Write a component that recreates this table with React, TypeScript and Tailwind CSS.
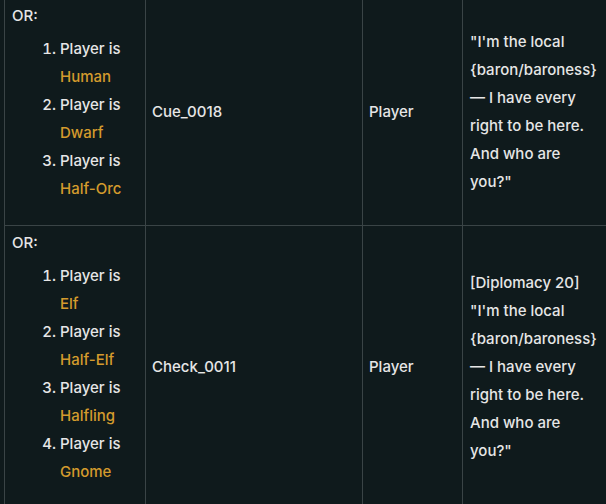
import React from "react";

type Row = {
    races: string[];
    id: string;
    speaker: string;
    lines: string[];
};

const rows: Row[] = [
    {
        races: ["Human", "Dwarf", "Half-Orc"],
        id: "Cue_0018",
        speaker: "Player",
        lines: [
            "\"I'm the local",
            "{baron/baroness}",
            "— I have every",
            "right to be here.",
            "And who are",
            "you?\"",
        ],
    },
    {
        races: ["Elf", "Half-Elf", "Halfling", "Gnome"],
        id: "Check_0011",
        speaker: "Player",
        lines: [
            "[Diplomacy 20]",
            "\"I'm the local",
            "{baron/baroness}",
            "— I have every",
            "right to be here.",
            "And who are",
            "you?\"",
        ],
    },
];

function ConditionCell({ races }: { races: string[] }) {
    return (
        <td className="border border-[#3a4446] px-[7px] pt-[3px] pb-[2px] align-top">
            <p className="leading-7">OR:</p>
            <ol className="list-decimal pl-[48px] mt-[5px] mb-[20px]">
                {races.map((race) => (
                    <li key={race} className="leading-7">
                        Player is
                        <br />
                        <span className="text-[#d49b2d]">{race}</span>
                    </li>
                ))}
            </ol>
        </td>
    );
}

export default function App() {
    return (
        <div
            className="w-[606px] h-[504px] overflow-hidden bg-[#0f1a1c] text-[#e6e6e6] text-[15px] font-medium"
            style={{ fontFamily: "Inter, 'Noto Sans', sans-serif" }}
        >
            <table className="ml-[4px] -mt-[2px] border-collapse table-fixed w-[660px]">
                <colgroup>
                    <col className="w-[141px]" />
                    <col className="w-[217px]" />
                    <col className="w-[100px]" />
                    <col className="w-[202px]" />
                </colgroup>
                <tbody>
                    {rows.map((row) => (
                        <tr key={row.id}>
                            <ConditionCell races={row.races} />
                            <td className="border border-[#3a4446] pl-[6px] pr-2 align-middle leading-7">
                                {row.id}
                            </td>
                            <td className="border border-[#3a4446] pl-[6px] pr-2 align-middle leading-7">
                                {row.speaker}
                            </td>
                            <td className="border border-[#3a4446] pl-[7px] pr-2 align-middle leading-7">
                                {row.lines.map((line) => (
                                    <div key={line}>{line}</div>
                                ))}
                            </td>
                        </tr>
                    ))}
                </tbody>
            </table>
        </div>
    );
}
